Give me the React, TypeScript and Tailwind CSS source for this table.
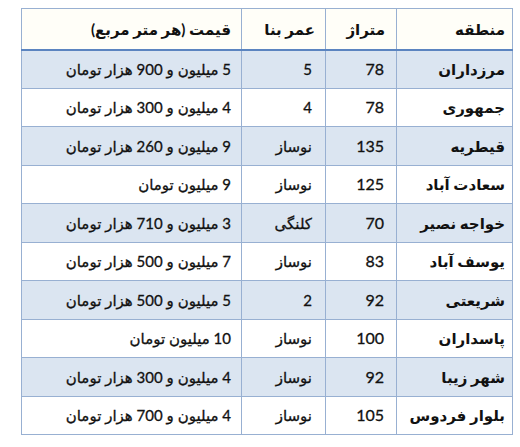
const rows = [
  { area: "مرزداران", size: "78", age: "5", price: "5 میلیون و 900 هزار تومان" },
  { area: "جمهوری", size: "78", age: "4", price: "4 میلیون و 300 هزار تومان" },
  { area: "قیطریه", size: "135", age: "نوساز", price: "9 میلیون و 260 هزار تومان" },
  { area: "سعادت آباد", size: "125", age: "نوساز", price: "9 میلیون تومان" },
  { area: "خواجه نصیر", size: "70", age: "کلنگی", price: "3 میلیون و 710 هزار تومان" },
  { area: "یوسف آباد", size: "83", age: "نوساز", price: "7 میلیون و 500 هزار تومان" },
  { area: "شریعتی", size: "92", age: "2", price: "5 میلیون و 500 هزار تومان" },
  { area: "پاسداران", size: "100", age: "نوساز", price: "10 میلیون تومان" },
  { area: "شهر زیبا", size: "92", age: "نوساز", price: "4 میلیون و 300 هزار تومان" },
  { area: "بلوار فردوس", size: "105", age: "نوساز", price: "4 میلیون و 700 هزار تومان" },
];

// digits come from Lato, Persian letters fall through to DejaVu Sans
const font = { fontFamily: 'Lato, "DejaVu Sans", Tahoma, sans-serif' };

export default function App() {
  return (
    <div className="w-[520px] h-[447px] bg-white pt-[8px] pl-[21px]" style={font}>
      <table dir="rtl" className="w-[491px] border-collapse text-[15px] text-[#111] table-fixed">
        <colgroup>
          <col className="w-[116px]" />
          <col className="w-[71px]" />
          <col className="w-[84px]" />
          <col className="w-[220px]" />
        </colgroup>
        <thead>
          <tr className="h-[41px] bg-[#fffef8] border-b-2 border-b-[#5b84c0]">
            <th className="border border-[#98b0d2] text-right font-bold text-[15px] pr-[7px]">منطقه</th>
            <th className="border border-[#98b0d2] text-right font-bold text-[15px] pr-[11px]">متراژ</th>
            <th className="border border-[#98b0d2] text-right font-bold text-[15px] pr-[10px]">عمر بنا</th>
            <th className="border border-[#98b0d2] text-right font-bold text-[15px] pr-[10px]">قیمت (هر متر مربع)</th>
          </tr>
        </thead>
        <tbody>
          {rows.map((r, i) => (
            <tr key={r.area} className={i % 2 === 0 ? "h-[38.5px] bg-[#dbe5f1]" : "h-[38.5px] bg-white"}>
              <td className="border border-[#98b0d2] text-right pr-[7px] font-bold">{r.area}</td>
              <td className="border border-[#98b0d2] text-right pr-[12px] text-[16px] [-webkit-text-stroke:0.3px_#111]">{r.size}</td>
              <td className="border border-[#98b0d2] text-right pr-[13px] [-webkit-text-stroke:0.3px_#111]">{r.age}</td>
              <td className="border border-[#98b0d2] text-right pr-[10px] [-webkit-text-stroke:0.3px_#111]">{r.price}</td>
            </tr>
          ))}
        </tbody>
      </table>
    </div>
  );
}
